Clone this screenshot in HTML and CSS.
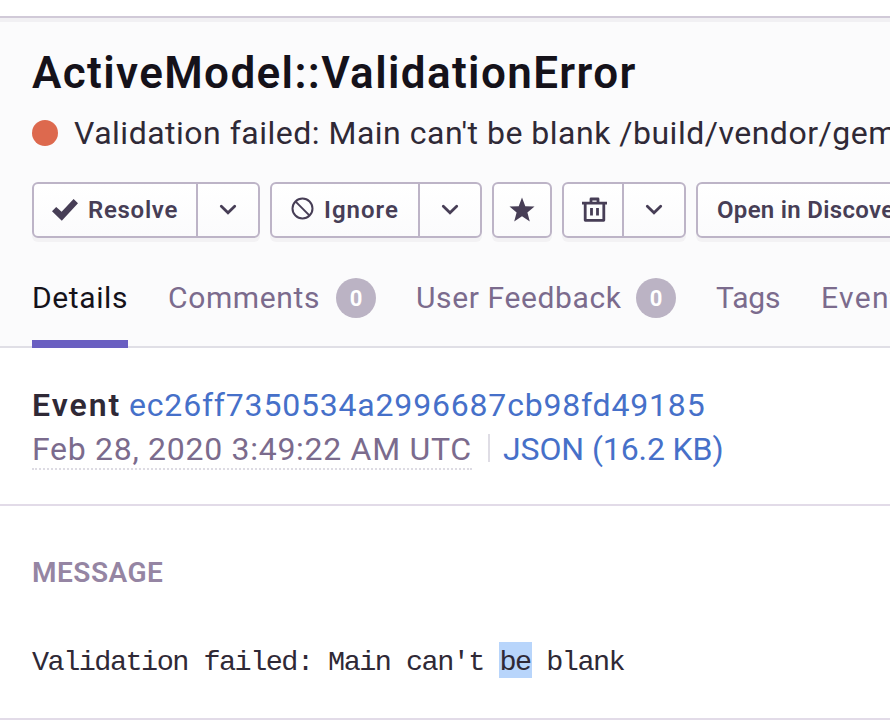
FILE: index.html
```html
<!DOCTYPE html>
<html lang="en">
<head>
<meta charset="utf-8">
<title>ActiveModel::ValidationError</title>
<link rel="stylesheet" href="styles.css">
</head>
<body>
<div class="topbar"></div>
<header class="issue-header">
  <h1 class="title">ActiveModel::ValidationError</h1>
  <div class="subtitle">
    <span class="level"></span>
    <span class="culprit">Validation failed: Main can't be blank /build/vendor/gems</span>
  </div>
  <div class="actions">
    <div class="group resolve">
      <button class="segment main">
        <svg class="icon-check" width="26" height="22" viewBox="0 0 26 22"><path d="M0 12.3 4.2 8 9.6 12.7 21.6 0 26 4.2 9.8 21.7Z" fill="currentColor"/></svg>
        <span class="label-resolve">Resolve</span>
      </button>
      <button class="segment toggle"><svg width="18" height="12" viewBox="0 0 18 12"><path d="M2.3 2.3 9 8.7l6.7-6.4" fill="none" stroke="currentColor" stroke-width="2.8" stroke-linecap="round"/></svg></button>
    </div>
    <div class="group ignore">
      <button class="segment main">
        <svg class="icon-ban" width="23" height="23" viewBox="0 0 23 23"><g fill="none" stroke="currentColor" stroke-width="2"><circle cx="11.5" cy="11.5" r="10"/><path d="m4.4 4.4 14.2 14.2"/></g></svg>
        <span class="label-ignore">Ignore</span>
      </button>
      <button class="segment toggle"><svg width="18" height="12" viewBox="0 0 18 12"><path d="M2.3 2.3 9 8.7l6.7-6.4" fill="none" stroke="currentColor" stroke-width="2.8" stroke-linecap="round"/></svg></button>
    </div>
    <div class="group star">
      <button class="segment main"><svg width="26" height="25" viewBox="0 0 26 25"><path d="m13 .6 3.3 8.6 9.2.4-7.1 5.8 2.4 9L13 19.3l-7.8 5.1 2.4-9L.5 9.6l9.2-.4Z" fill="currentColor"/></svg></button>
    </div>
    <div class="group trash">
      <button class="segment main"><svg width="25" height="25" viewBox="0 0 25 25"><path d="M0 6.2h25M9 6.2V2h7v4.2M3.2 6v17.3h18.6V6M9.5 11v7.6M15.5 11v7.6" fill="none" stroke="currentColor" stroke-width="2.8" stroke-linejoin="round"/></svg></button>
      <button class="segment toggle"><svg width="18" height="12" viewBox="0 0 18 12"><path d="M2.3 2.3 9 8.7l6.7-6.4" fill="none" stroke="currentColor" stroke-width="2.8" stroke-linecap="round"/></svg></button>
    </div>
    <div class="group discover">
      <button class="segment main"><span>Open in Discover</span></button>
    </div>
  </div>
  <nav class="tabs">
    <a class="tab active">Details</a>
    <a class="tab">Comments<span class="badge">0</span></a>
    <a class="tab feedback">User Feedback<span class="badge">0</span></a>
    <a class="tab tags">Tags</a>
    <a class="tab events">Events</a>
  </nav>
</header>
<section class="event">
  <div class="row"><strong>Event</strong><a class="event-id">ec26ff7350534a2996687cb98fd49185</a></div>
  <div class="row"><time>Feb 28, 2020 3:49:22 AM UTC</time><a class="json">JSON (16.2 KB)</a></div>
</section>
<section class="message">
  <h2>MESSAGE</h2>
  <pre>Validation failed: Main can't <mark>be</mark> blank</pre>
</section>
</body>
</html>
```
FILE: styles.css
```css
* { box-sizing: border-box; }
body {
  margin: 0;
  height: 726px;
  overflow: hidden;
  background: #fff;
  color: #2f2936;
  font-family: Roboto, "Liberation Sans", sans-serif;
}
.topbar {
  height: 22px;
  border-bottom: 4px solid #f1f0f3;
  box-shadow: inset 0 -2px #d1cad8;
}
.issue-header {
  height: 326px;
  padding: 25px 0 0 32px;
  background: #fbfbfc;
  border-bottom: 2px solid #e0dfe6;
  white-space: nowrap;
}
.title {
  margin: 0;
  color: #15121a;
  font-size: 44px;
  font-weight: 600;
  line-height: 52px;
  letter-spacing: 1.38px;
}
.subtitle {
  display: flex;
  align-items: center;
  gap: 16px;
  height: 38px;
  margin-top: 15px;
  font-size: 32px;
  letter-spacing: 0.5px;
}
.level {
  flex: none;
  width: 26px;
  height: 26px;
  border-radius: 50%;
  background: #dd694e;
}
.actions {
  display: flex;
  gap: 10px;
  height: 56px;
  margin-top: 30px;
}
.group {
  display: flex;
  flex: none;
  border: 2px solid #bdb4c7;
  border-radius: 6px;
  background: linear-gradient(#fff, #fbfbfc);
  box-shadow: 0 4px 0 #f3f2f4;
}
.segment {
  display: flex;
  align-items: center;
  justify-content: center;
  padding: 0;
  border: 0;
  background: none;
  color: #473e56;
  font: 600 24px Roboto, "Liberation Sans", sans-serif;
}
.segment + .segment { border-left: 2px solid #bdb4c7; }
.segment svg { flex: none; display: block; }
.main { flex: 1; }
.toggle { width: 62px; }
.resolve { width: 228px; }
.resolve .main, .ignore .main { justify-content: flex-start; padding-left: 18px; }
.ignore { width: 212px; }
.ignore .main { padding-left: 19px; }
.star { width: 60px; }
.star svg { margin-bottom: 1px; }
.trash { width: 124px; }
.trash .main { padding-left: 2px; }
.trash .main svg { margin-bottom: 1px; }
.discover { width: 240px; }
.discover .main { justify-content: flex-start; padding-left: 19px; letter-spacing: 0.3px; }
.icon-check { margin-right: 10px; }
.icon-ban { margin: 0 10px 4px 0; }
.label-resolve { letter-spacing: 0.7px; }
.label-ignore { letter-spacing: 1px; }
.tabs {
  display: flex;
  gap: 40px;
  height: 100px;
  margin-top: 10px;
}
.tab {
  display: flex;
  align-items: center;
  flex: none;
  height: 100px;
  padding-bottom: 1px;
  color: #7b6b8d;
  font-size: 30px;
  letter-spacing: 0.62px;
}
.active { width: 96px; color: #15121a; box-shadow: inset 0 -8px #6a5fc1; }
.feedback { width: 260px; }
.tags { width: 65px; letter-spacing: -0.1px; }
.events { letter-spacing: 1.4px; }
.badge {
  position: relative;
  top: 0.5px;
  width: 40px;
  height: 40px;
  margin-left: 16px;
  border-radius: 50%;
  background: #bbb3c4;
  color: #fff;
  font-size: 22px;
  font-weight: 700;
  line-height: 41px;
  letter-spacing: 0;
  text-align: center;
}
.feedback .badge { margin-left: auto; }
.event {
  height: 158px;
  padding: 35px 32px 0;
  border-bottom: 2px solid #e2dbe8;
  font-size: 32px;
}
.row { display: flex; align-items: center; height: 44px; white-space: nowrap; }
strong { width: 97px; font-weight: 600; letter-spacing: 2px; }
.event-id, .json { color: #4670c9; }
.event-id { letter-spacing: 0.81px; }
time {
  align-self: flex-start;
  width: 440px;
  height: 43px;
  border-bottom: 2px dotted #dddbe3;
  color: #7b6b8d;
  line-height: 44px;
  letter-spacing: 0.71px;
}
.json {
  display: flex;
  align-items: center;
  letter-spacing: -0.1px;
}
.json::before {
  content: "";
  width: 2px;
  height: 28px;
  margin: 0 13px 2px 16px;
  background: #dfdde5;
}
.message {
  height: 214px;
  padding: 48px 32px 0;
  border-bottom: 2px solid #e2dbe8;
}
h2 {
  margin: 0;
  color: #9585a3;
  font-size: 28px;
  font-weight: 600;
  line-height: 37px;
  letter-spacing: 0.5px;
}
pre {
  margin: 52px 0 0;
  font-family: "Liberation Mono", monospace;
  font-size: 28.5px;
  line-height: 40px;
  letter-spacing: -1.52px;
}
mark {
  margin-right: -1px;
  padding: 4px 1px 0 0;
  background: linear-gradient(#b8d5fb, #b8d5fb) 0 0 / 100% 36px no-repeat;
  color: inherit;
}
```
